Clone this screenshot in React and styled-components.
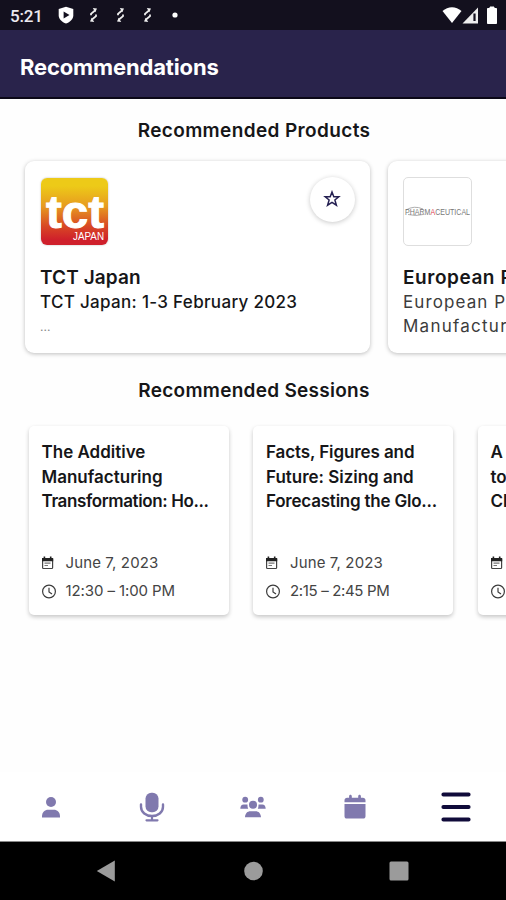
import React from 'react';
import styled, { createGlobalStyle } from 'styled-components';

const navy = '#29234b';
const ink = '#161618';
const lilac = '#8079ae';

const GlobalStyle = createGlobalStyle`
  * {
    box-sizing: border-box;
  }

  body {
    margin: 0;
    background: #fff;
    font-family: Inter, 'Liberation Sans', sans-serif;
  }
`;

const Screen = styled.div`
  display: flex;
  flex-direction: column;
  width: 506px;
  height: 900px;
  overflow: hidden;
  background: #fefefe;
`;

const StatusBar = styled.div`
  display: flex;
  align-items: center;
  justify-content: space-between;
  height: 30px;
  padding: 0 7px 0 10px;
  background: #13101e;
  color: #fff;
`;

const StatusGroup = styled.div`
  display: flex;
  align-items: center;
`;

const Notifications = styled.div`
  display: flex;
  margin-left: 6px;
`;

const Clock = styled.span`
  width: 48px;
  padding: 2px 0 0;
  font: 500 17px/20px Roboto, sans-serif;
  letter-spacing: -0.2px;
  color: #eceaf0;
`;

const Header = styled.header`
  height: 69px;
  padding: 0 20px;
  border-bottom: 2px solid #0b0817;
  background: ${navy};
  color: #fff;
`;

const Line = styled.span`
  display: block;
  width: max-content;
  white-space: nowrap;
  letter-spacing: ${p => p.$gap || 0}px;
`;

const PageTitle = styled.h1`
  margin: 0;
  font-size: 22px;
  font-weight: 700;
  line-height: 74px;
`;

const Content = styled.main`
  flex: 1;
  overflow: hidden;
`;

const SectionTitle = styled.h2`
  display: flex;
  justify-content: center;
  height: 28px;
  margin: ${p => p.$top}px 0 0;
  padding-left: 2px;
  font-size: 19px;
  font-weight: 600;
  line-height: 28px;
  color: ${ink};
`;

const ProductRow = styled.div`
  display: flex;
  gap: 18px;
  padding: 16px 0 0 25px;
`;

const ProductCard = styled.article`
  flex: none;
  width: 345px;
  height: 192px;
  padding: 16px 15px;
  border-radius: 9px;
  background: #fff;
  box-shadow: 0 1px 4px rgba(0, 0, 0, 0.26);
`;

const CardTop = styled.div`
  display: flex;
  justify-content: space-between;
  height: 88px;
`;

const TctLogo = styled.div`
  width: 67px;
  height: 67px;
  margin: 1px 0 0 1px;
  border-radius: 6px;
  overflow: hidden;
  background: linear-gradient(#edca18 12%, #e79b20 42%, #d84824 72%, #cf202b 92%);
  box-shadow: 0 0 2px rgba(0, 0, 0, 0.3);
`;

const PharmaLogo = styled.div`
  width: 69px;
  height: 69px;
  border: 1px solid #dedede;
  border-radius: 5px;
  overflow: hidden;
`;

const StarButton = styled.button`
  display: grid;
  place-items: center;
  width: 45px;
  height: 45px;
  padding: 0 2px 2px 0;
  border: 0;
  border-radius: 50%;
  background: #fff;
  box-shadow: 0 1px 5px rgba(0, 0, 0, 0.22);
`;

const ProductName = styled.h3`
  margin: 0;
  font-size: 19px;
  font-weight: 600;
  line-height: 26px;
  color: ${ink};
`;

const ProductText = styled.div`
  margin-top: -1px;
  font-size: 17px;
  font-weight: ${p => (p.$strong ? 500 : 400)};
  line-height: 24px;
  color: ${p => (p.$strong ? ink : '#3c3c3c')};
`;

const More = styled.div`
  font-size: 12px;
  line-height: 26px;
  color: #888;
`;

const SessionRow = styled.div`
  display: flex;
  gap: 24.5px;
  padding: 21px 0 0 28.5px;
`;

const SessionCard = styled.article`
  display: flex;
  flex-direction: column;
  flex: none;
  width: 200px;
  height: 189px;
  padding: 14px 13px 10px;
  border-radius: 5px;
  background: #fff;
  box-shadow: 0 2px 4px rgba(0, 0, 0, 0.22);
`;

const SessionTitle = styled.h3`
  margin: 0 0 auto;
  font-size: 17px;
  font-weight: 600;
  line-height: 24.5px;
  color: ${ink};
`;

const Meta = styled.div`
  display: flex;
  align-items: center;
  height: 28px;
  font-size: 15px;
  line-height: 28px;
  color: #444;

  svg {
    flex: none;
    margin-right: auto;
  }

  span {
    width: 150px;
  }
`;

const TabBar = styled.nav`
  display: grid;
  grid-template-columns: repeat(5, 101.4px);
  place-items: center;
  height: 70px;
  border-bottom: 1px solid #888;
  background: #fff;
  color: ${lilac};
`;

const SystemBar = styled.div`
  display: flex;
  align-items: center;
  justify-content: space-between;
  height: 58px;
  padding: 0 97px 0 96px;
  background: #000;
  color: #9b9b9b;
`;

const ShieldIcon = () => (
  <svg width="16" height="18" viewBox="0 0 16 18">
    <path d="M8 .7 15.3 3v6.2c0 4-3.2 6.800-7.300 8.300C3.900 16 .7 13.200.7 9.200V3Z" fill="#fff" />
    <path d="m5.600 5.600 5.900 3.400-5.900 3.400Z" fill="#13101e" />
  </svg>
);

const SyncIcon = () => (
  <svg width="27" height="16" viewBox="0 0 27 16">
    <path d="M11 8.300V6.800l4-3.300M16 7.400v1.700l-4 3.400" fill="none" stroke="#eee" strokeWidth="1.800" />
    <path d="m12.800 1 4.200.4-1.700 3.900ZM14.200 15l-4.200-.4 1.700-3.900Z" fill="#eee" />
  </svg>
);

const DotIcon = () => (
  <svg width="27" height="16" viewBox="0 0 27 16">
    <circle cx="14" cy="8" r="2.600" fill="#fff" />
  </svg>
);

const SignalIcons = () => (
  <svg width="58" height="20" viewBox="0 0 58 20">
    <path d="M1.500 6C7 .9 15 .9 20.500 6L11 18Z" fill="#fff" />
    <path d="M37 2.500v16H21.500Z" fill="#eee" />
    <path d="M32.400 8.500h2.200v7.500h-2.200Z" fill="#13101e" />
    <path d="M46.500 3.500h2.500V2h4v1.500H55.500v15H46.500Z" fill="#fff" stroke="#fff" strokeLinejoin="round" />
  </svg>
);

const StarIcon = () => (
  <svg width="18" height="18" viewBox="0 0 18 18" fill="none" stroke="#252052" strokeWidth="1.500">
    <path d="m9 2 1.800 4.700h5L11.900 10l1.500 5.200L9 12.300l-4.400 2.900L6.100 10 2.200 6.700h5Z" />
  </svg>
);

const EventIcon = () => (
  <svg width="14" height="14" viewBox="1 0 14 14">
    <rect x="1.600" y="2.500" width="10" height="10" rx=".8" fill="#fff" stroke="#444" strokeWidth="1.200" />
    <path d="M1 2h11.200v3.200H1ZM2.600.6h1.600V3H2.600ZM8.900.6h1.600V3H8.900Z" fill="#222" />
    <path d="M3.500 7.200h6M3.500 9.500h3.500" stroke="#777" strokeWidth="1.200" />
  </svg>
);

const ClockIcon = () => (
  <svg width="15" height="15" viewBox="0 0 15 15" fill="none" stroke="#3c3c3c" strokeWidth="1.200">
    <circle cx="7" cy="7.500" r="6.400" />
    <path d="M7 3.800v4.100l3 2.200" />
  </svg>
);

const UserIcon = () => (
  <svg width="20" height="22" viewBox="0 0 20 22" fill="currentColor">
    <circle cx="10" cy="6" r="5" />
    <path d="M1 21.500v-1.200c0-4.100 2.700-6.600 6.300-6.600h5.400c3.600 0 6.300 2.500 6.300 6.600v1.200Z" />
  </svg>
);

const MicIcon = () => (
  <svg width="26" height="30" viewBox="0 0 26 30" fill="none" stroke="currentColor">
    <rect x="6.500" y=".8" width="13" height="19.500" rx="5.800" fill="currentColor" stroke="none" />
    <path d="M2 12.500v2.200C2 20.300 7 24 13 24s11-3.700 11-9.300v-2.200" strokeWidth="2.400" strokeLinecap="round" />
    <path d="M13 24v4M7.500 28.300h11" strokeWidth="2.200" strokeLinecap="round" />
  </svg>
);

const UsersIcon = () => (
  <svg width="28" height="22" viewBox="0 0 28 22" fill="currentColor">
    <circle cx="6.200" cy="3.700" r="2.900" />
    <circle cx="21.800" cy="3.700" r="2.900" />
    <circle cx="14" cy="8.800" r="4" />
    <path d="M1.300 12.800c0-3 1.400-4.400 3.400-4.400h2.700c.5 0 .9.100 1.200.3-.2 1.500 0 2.900.6 4.100ZM26.700 12.800c0-3-1.400-4.400-3.400-4.400h-2.700c-.5 0-.9.100-1.200.3.2 1.500 0 2.900-.6 4.100ZM6 21.200c.2-3.900 2.400-6 5.400-6h5.200c3 0 5.200 2.100 5.400 6Z" />
  </svg>
);

const CalendarIcon = () => (
  <svg width="22" height="25" viewBox="0 0 22 25" fill="currentColor">
    <path d="M.5 8.200V6.500c0-1.700 1-2.700 2.700-2.700h1.900V2.200c0-2 2.700-2 2.700 0v1.600h6.400V2.200c0-2 2.700-2 2.700 0v1.600h1.900c1.700 0 2.700 1 2.700 2.700v1.700ZM.5 10h21v12.200c0 1.400-.9 2.300-2.300 2.300H2.800c-1.400 0-2.300-.9-2.300-2.300Z" />
  </svg>
);

const MenuIcon = () => (
  <svg width="30" height="32" viewBox="0 0 30 32" stroke="#100b3a" strokeWidth="4" strokeLinecap="round">
    <path d="M2.400 3.500h25.200M2.400 16h25.200M2.400 28.500h25.200" />
  </svg>
);

const sessions = [
  {
    title: [['The Additive', 0], ['Manufacturing', 0], ['Transformation: Ho...', -0.38]],
    date: 'June 7, 2023',
    time: ['12:30 – 1:00 PM', -0.1],
  },
  {
    title: [['Facts, Figures and', -0.1], ['Future: Sizing and', -0.02], ['Forecasting the Glo...', -0.22]],
    date: 'June 7, 2023',
    time: ['2:15 – 2:45 PM', -0.35],
  },
  {
    title: [['A V', 0], ['to', 0], ['Cl', 0]],
  },
];

const Session = ({ title, date, time }) => (
  <SessionCard>
    <SessionTitle>
      {title.map(([text, gap]) => (
        <Line key={text} $gap={gap}>{text}</Line>
      ))}
    </SessionTitle>
    <Meta>
      <EventIcon />
      {date && <Line $gap={0.12}>{date}</Line>}
    </Meta>
    <Meta>
      <ClockIcon />
      {time && <Line $gap={time[1]}>{time[0]}</Line>}
    </Meta>
  </SessionCard>
);

const App = () => (
  <>
    <GlobalStyle />
    <Screen>
      <StatusBar>
        <StatusGroup>
          <Clock>5:21</Clock>
          <ShieldIcon />
          <Notifications>
            <SyncIcon />
            <SyncIcon />
            <SyncIcon />
            <DotIcon />
          </Notifications>
        </StatusGroup>
        <SignalIcons />
      </StatusBar>
      <Header>
        <PageTitle>
          <Line $gap={-0.15}>Recommendations</Line>
        </PageTitle>
      </Header>
      <Content>
        <SectionTitle $top={18}>
          <Line $gap={0.37}>Recommended Products</Line>
        </SectionTitle>
        <ProductRow>
          <ProductCard>
            <CardTop>
              <TctLogo>
                <svg width="67" height="67" viewBox="0 0 67 67" fill="#fff" fontFamily="Liberation Sans, sans-serif">
                  <text x="5" y="50" fontSize="47" fontWeight="700" textLength="58" lengthAdjust="spacingAndGlyphs" stroke="#fff">tct</text>
                  <text x="32" y="61.500" fontSize="10.500" textLength="31" lengthAdjust="spacingAndGlyphs">JAPAN</text>
                </svg>
              </TctLogo>
              <StarButton aria-label="Favourite">
                <StarIcon />
              </StarButton>
            </CardTop>
            <ProductName>
              <Line $gap={0.1}>TCT Japan</Line>
            </ProductName>
            <ProductText $strong>
              <Line $gap={0.32}>TCT Japan: 1-3 February 2023</Line>
            </ProductText>
            <More>...</More>
          </ProductCard>
          <ProductCard>
            <CardTop>
              <PharmaLogo>
                <svg width="67" height="67" viewBox="0 0 67 67" fontFamily="Liberation Sans, sans-serif" fontSize="9">
                  <path d="M2 32q8-5 17-1M4 36.500q8 2 15 0" fill="none" stroke="#999" strokeWidth=".8" />
                  <text x="1" y="36.500" textLength="65" lengthAdjust="spacingAndGlyphs" fill="#777">
                    PHARM<tspan fill="#e0374b">A</tspan>CEUTICAL
                  </text>
                </svg>
              </PharmaLogo>
            </CardTop>
            <ProductName>
              <Line $gap={0.55}>European Pharma</Line>
            </ProductName>
            <ProductText>
              <Line $gap={1.1}>European Pharma</Line>
              <Line $gap={1.25}>Manufacturer</Line>
            </ProductText>
          </ProductCard>
        </ProductRow>
        <SectionTitle $top={24}>
          <Line $gap={0.27}>Recommended Sessions</Line>
        </SectionTitle>
        <SessionRow>
          {sessions.map(session => (
            <Session key={session.title[0][0]} {...session} />
          ))}
        </SessionRow>
      </Content>
      <TabBar>
        <UserIcon />
        <MicIcon />
        <UsersIcon />
        <CalendarIcon />
        <MenuIcon />
      </TabBar>
      <SystemBar>
        <svg width="20" height="22" viewBox="0 0 20 22" fill="currentColor">
          <path d="M.8 11 18.800.6v20.800Z" />
        </svg>
        <svg width="20" height="20" viewBox="0 0 20 20" fill="currentColor">
          <circle cx="10.500" cy="10" r="9.300" />
        </svg>
        <svg width="20" height="20" viewBox="0 0 20 20" fill="currentColor">
          <rect x=".5" y=".5" width="19" height="19" rx="1.500" />
        </svg>
      </SystemBar>
    </Screen>
  </>
);

export default App;
